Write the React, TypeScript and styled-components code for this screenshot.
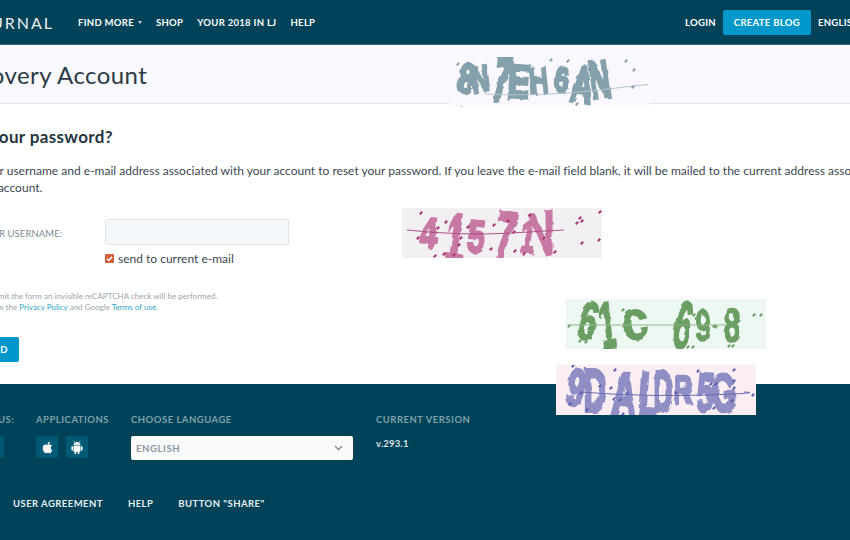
import React from "react";
import styled, { createGlobalStyle } from "styled-components";
import { FaApple, FaFacebookF, FaTwitter } from "react-icons/fa";

const Global = createGlobalStyle`
  html, body { margin: 0; padding: 0; width: 850px; height: 540px; overflow: hidden; background: #fff; }
  body { font-family: "Lato", "Liberation Sans", sans-serif; color: #2d3a42; }
  a { text-decoration: none; color: inherit; }
`;

const Page = styled.div`
  position: relative;
  width: 850px;
  height: 540px;
  overflow: hidden;
`;

const Header = styled.header`
  height: 44px;
  background: #004359;
  border-bottom: 1px solid #2f6a7c;
  display: flex;
  align-items: center;
  white-space: nowrap;
  color: #fff;
  font-size: 9.5px;
  font-weight: 700;
  letter-spacing: 0.3px;
`;

const Logo = styled.div`
  width: 54px;
  flex: none;
  display: flex;
  justify-content: flex-end;
  overflow: hidden;
  font-size: 16px;
  font-weight: 400;
  letter-spacing: 2px;
  color: #e6eef1;
`;

const Nav = styled.nav`
  display: flex;
  align-items: center;
  gap: 14px;
  margin-left: 24px;
`;

const Caret = styled.span`
  display: inline-block;
  margin-left: 4px;
  vertical-align: 2px;
  border-left: 2.5px solid transparent;
  border-right: 2.5px solid transparent;
  border-top: 3px solid #c4d2d8;
`;

const Right = styled.div`
  margin-left: auto;
  display: flex;
  align-items: center;
  gap: 7px;
  width: 165px;
  flex: none;
  overflow: hidden;
`;

const CreateBlog = styled.a`
  flex: none;
  width: 88px;
  height: 25px;
  display: flex;
  align-items: center;
  justify-content: center;
  border-radius: 2px;
  background: #0098cb;
  color: #fff;
`;

const TitleBand = styled.div`
  height: 57px;
  padding-top: 1px;
  background: #f8f9ff;
  border-bottom: 1px solid #e3e6ea;
  display: flex;
  align-items: center;
  overflow: hidden;
  white-space: nowrap;
`;

const Title = styled.h1`
  margin: 0 0 0 -48.5px;
  font-size: 24px;
  font-weight: 400;
  letter-spacing: 0.4px;
  color: #2b3a44;
`;

const Main = styled.main`
  height: 280px;
  box-sizing: border-box;
  padding: 23px 0 0 0;
  margin-left: -60px;
  width: 1200px;
  background: #fff;
`;

const Heading = styled.h2`
  margin: 0 0 0 -6px;
  font-size: 17px;
  line-height: 20px;
  font-weight: 700;
  letter-spacing: 0.35px;
  color: #26343d;
`;

const Lead = styled.p`
  margin: 16px 0 0 5px;
  width: 960px;
  font-size: 12px;
  line-height: 16.5px;
  text-indent: 4px;
  letter-spacing: 0.01px;
  color: #3c4850;
`;

const Row = styled.div`
  margin-top: 23px;
  display: flex;
  align-items: center;
`;

const Label = styled.label`
  width: 159px;
  flex: none;
  margin: 3px 0 0 6px;
  font-size: 9.5px;
  letter-spacing: 0.1px;
  color: #7d8b93;
`;

const Input = styled.input`
  width: 184px;
  height: 26px;
  box-sizing: border-box;
  background: #f5f8fa;
  border: 1px solid #e0e5e9;
  border-radius: 2px;
  padding: 0 6px;
`;

const CheckRow = styled.div`
  margin: 6px 0 0 165px;
  display: flex;
  align-items: center;
  gap: 4px;
  font-size: 12px;
  color: #3c4850;
`;

const Check = styled.span`
  width: 9px;
  height: 9px;
  flex: none;
  border-radius: 1px;
  background: #d2613a;
  display: flex;
  align-items: center;
  justify-content: center;
`;

const Note = styled.p`
  margin: 25px 0 0 7px;
  font-size: 8px;
  line-height: 11px;
  letter-spacing: 0.02px;
  color: #9aa5ab;
`;

const NoteLink = styled.a`
  color: #2fa3c9;
`;

const Submit = styled.button`
  display: block;
  margin-top: 24px;
  width: 79px;
  height: 25px;
  padding: 0 11px 0 0;
  border: 0;
  border-radius: 2px;
  text-align: right;
  background: #0098cb;
  color: #fff;
  font: 700 9.5px "Lato", sans-serif;
  letter-spacing: 0.45px;
`;

const Footer = styled.footer`
  height: 156px;
  background: #004359;
  box-sizing: border-box;
  padding-top: 29px;
  white-space: nowrap;
  overflow: hidden;
`;

const Cols = styled.div`
  display: flex;
  margin-left: -48px;
`;

const Col = styled.div<{ $w: number }>`
  width: ${(p) => p.$w}px;
  flex: none;
`;

const ColTitle = styled.div`
  font-size: 9.5px;
  line-height: 14px;
  font-weight: 700;
  letter-spacing: 0.5px;
  color: #7fa0ad;
  margin-bottom: 9px;
`;

const IconRow = styled.div`
  display: flex;
  gap: 8px;
`;

const SocialBtn = styled.a`
  width: 22px;
  height: 22px;
  border-radius: 2px;
  background: #005a75;
  color: #fff;
  display: flex;
  align-items: center;
  justify-content: center;
  font-size: 13px;
`;

const Select = styled.div`
  width: 222px;
  height: 24px;
  box-sizing: border-box;
  padding: 0 10px 0 5px;
  border-radius: 2px;
  background: #f7f9fb;
  display: flex;
  align-items: center;
  justify-content: space-between;
  font-size: 9.5px;
  font-weight: 700;
  letter-spacing: 0.6px;
  color: #8b989f;
`;

const Version = styled.div`
  padding-top: 1px;
  font-size: 9.5px;
  line-height: 14px;
  font-weight: 700;
  letter-spacing: 0.2px;
  color: #d9e4e8;
`;

const Bottom = styled.nav`
  display: flex;
  gap: 25px;
  margin: 37px 0 0 13px;
  font-size: 9.5px;
  line-height: 14px;
  font-weight: 700;
  letter-spacing: 0.45px;
  color: #e6eef1;
`;

/* CAPTCHA pictures laid over the page */
const CaptchaBox = styled.svg<{ $x: number; $y: number; $bg: string }>`
  position: absolute;
  left: ${(p) => p.$x}px;
  top: ${(p) => p.$y}px;
  width: 200px;
  height: 50px;
  background: ${(p) => p.$bg};
`;

type Glyph = [string, number, number, number, number, number];
type CaptchaData = {
  id: string; x: number; y: number; bg: string; ink: string; dot: string; rule: string; weight: number;
  line: string; glyphs: Glyph[]; dots: [number, number][];
};

const captchas: CaptchaData[] = [
  {
    id: "c1", x: 449, y: 57, bg: "#fbf7ff", ink: "#84a1ab", dot: "#84a1ab", rule: "#b3c6cd", weight: 2.4,
    line: "M36 37 Q90 40 150 33 T196 28",
    glyphs: [
      ["8", 14, 35, 14, 0.95, 1.35], ["N", 33, 35, -8, 0.85, 1.25], ["7", 50, 44, 8, 1, 2.1],
      ["E", 69, 40, 4, 1.1, 1.55], ["H", 91, 36, -6, 0.85, 1.2], ["6", 112, 35, 4, 0.8, 1.2],
      ["A", 131, 45, 8, 0.95, 1.65], ["N", 153, 40, -8, 0.9, 1.7],
    ],
    dots: [[9,7],[28,11],[54,4],[102,3],[119,4],[135,9],[147,9],[153,5],[177,4],[185,13],[12,51],[60,42],[128,47],[184,30]],
  },
  {
    id: "c2", x: 402, y: 208, bg: "#f3f0f3", ink: "#c878a5", dot: "#a8326f", rule: "#b0508a", weight: 1.8,
    line: "M5 22 Q60 28 110 25 T162 22",
    glyphs: [
      ["4", 25, 40, 6, 1.1, 1.45], ["1", 50, 54, 8, 1.1, 2.3], ["5", 73, 44, 6, 1.1, 1.5],
      ["7", 100, 52, 8, 1.2, 2.3], ["1", 124, 44, 8, 0.9, 1.5], ["V", 147, 46, -12, 1.15, 2],
    ],
    dots: [[19,5],[44,14],[16,30],[36,20],[66,19],[59,30],[57,37],[42,46],[52,47],[33,48],[92,17],[106,13],[112,24],[128,7],[142,30],[113,43],[89,41],[122,46],[153,44],[175,15],[178,10],[180,13],[180,35],[197,32],[198,4]],
  },
  {
    id: "c3", x: 566, y: 299, bg: "#eef8f3", ink: "#6b9e63", dot: "#6b9e63", rule: "#8db687", weight: 1,
    line: "M3 26 L160 26",
    glyphs: [
      ["6", 17, 40, 16, 1.1, 1.8], ["1", 44, 49, -6, 1, 2.2], ["c", 72, 40, -10, 1.6, 1.8],
      ["6", 113, 49, 10, 1.05, 2.25], ["9", 137, 42, 0, 0.9, 1.5], ["8", 166, 43, 0, 1.05, 1.6],
    ],
    dots: [[3,27],[14,42],[20,43],[57,11],[125,7],[128,16],[148,27],[150,28],[122,48],[127,48],[163,47],[167,47],[188,16],[195,16]],
  },
  {
    id: "c4", x: 556, y: 365, bg: "#fbeef3", ink: "#8f8fc6", dot: "#5f5fb0", rule: "#6a6ab4", weight: 2,
    line: "M24 27 Q90 32 150 30 T188 27",
    glyphs: [
      ["9", 17, 40, 10, 1.05, 1.7], ["D", 39, 46, 0, 1.05, 2], ["A", 67, 50, 4, 1.1, 2.05],
      ["L", 91, 51, 4, 0.95, 2.1], ["D", 107, 46, 0, 0.85, 1.9], ["R", 127, 39, 0, 0.9, 1.35],
      ["5", 148, 46, 4, 1, 1.8], ["G", 169, 46, -4, 1.05, 1.75],
    ],
    dots: [[17,1],[25,28],[14,39],[31,45],[59,5],[44,21],[55,23],[58,34],[64,35],[71,28],[67,49],[120,28],[142,6],[155,19],[160,19],[178,5],[178,16],[178,23],[176,36],[158,43],[197,30]],
  },
];

function Captcha({ c }: { c: CaptchaData }) {
  return (
    <CaptchaBox $x={c.x} $y={c.y} $bg={c.bg} viewBox="0 0 200 50" aria-hidden="true">
      <defs>
        <filter id={c.id} x="-10%" y="-10%" width="120%" height="120%">
          <feTurbulence type="fractalNoise" baseFrequency="0.09" numOctaves="2" seed="4" />
          <feDisplacementMap in="SourceGraphic" scale="4" />
          <feGaussianBlur stdDeviation="0.45" />
        </filter>
      </defs>
      <g filter={`url(#${c.id})`}>
        {c.glyphs.map(([ch, x, y, r, sx, sy], i) => (
          <text
            key={i}
            transform={`translate(${x} ${y}) rotate(${r}) scale(${sx} ${sy})`}
            textAnchor="middle"
            fontFamily="Liberation Sans, sans-serif"
            fontWeight="700"
            fontSize="30"
            fill={c.ink}
            stroke={c.ink}
            strokeWidth={c.weight}
          >
            {ch}
          </text>
        ))}
      </g>
      <path d={c.line} fill="none" stroke={c.rule} strokeWidth="1" />
      {c.dots.map(([x, y], i) => (
        <path key={i} d={`M${x - 1.2} ${y + 1.2} L${x + 1.2} ${y - 1.2}`} stroke={c.dot} strokeWidth="2" />
      ))}
    </CaptchaBox>
  );
}

function AndroidIcon() {
  return (
    <svg width="14" height="15" viewBox="0 0 16 17" fill="#fff">
      <path d="M4 6.2a4 4 0 0 1 8 0z" />
      <path d="M5.4 2.8 4.4.8M10.6 2.8l1-2" stroke="#fff" strokeWidth=".7" />
      <rect x="4" y="6.9" width="8" height="6.6" rx="1" />
      <rect x="1.6" y="6.9" width="1.8" height="5.2" rx=".9" />
      <rect x="12.6" y="6.9" width="1.8" height="5.2" rx=".9" />
      <rect x="5.3" y="12.5" width="1.8" height="3.8" rx=".9" />
      <rect x="8.9" y="12.5" width="1.8" height="3.8" rx=".9" />
      <circle cx="6.2" cy="4.4" r=".55" fill="#005a75" />
      <circle cx="9.8" cy="4.4" r=".55" fill="#005a75" />
    </svg>
  );
}

export default function App() {
  return (
    <Page>
      <Global />
      <Header>
        <Logo>JOURNAL</Logo>
        <Nav>
          <a>FIND MORE<Caret /></a>
          <a>SHOP</a>
          <a>YOUR 2018 IN LJ</a>
          <a>HELP</a>
        </Nav>
        <Right>
          <a>LOGIN</a>
          <CreateBlog>CREATE BLOG</CreateBlog>
          <a>ENGLISH</a>
        </Right>
      </Header>
      <TitleBand>
        <Title>Recovery Account</Title>
      </TitleBand>
      <Main>
        <Heading>Forgot your password?</Heading>
        <Lead>
          Enter your username and e-mail address associated with your account to reset your password. If you leave the
          e-mail field blank, it will be mailed to the current address associated with your account.
        </Lead>
        <Row>
          <Label>ENTER YOUR USERNAME:</Label>
          <Input />
        </Row>
        <CheckRow>
          <Check>
            <svg width="7" height="7" viewBox="0 0 10 10">
              <path d="M1.5 5.2 L4 7.8 L8.6 2.4" fill="none" stroke="#fff" strokeWidth="2" />
            </svg>
          </Check>
          send to current e-mail
        </CheckRow>
        <Note>
          When you submit the form an invisible reCAPTCHA check will be performed.
          <br />
          You must follow the <NoteLink>Privacy Policy</NoteLink> and Google <NoteLink>Terms of use</NoteLink>.
        </Note>
        <Submit>SEND</Submit>
      </Main>
      <Footer>
        <Cols>
          <Col $w={84}>
            <ColTitle>FOLLOW US:</ColTitle>
            <IconRow>
              <SocialBtn><FaFacebookF /></SocialBtn>
              <SocialBtn><FaTwitter /></SocialBtn>
            </IconRow>
          </Col>
          <Col $w={95}>
            <ColTitle>APPLICATIONS</ColTitle>
            <IconRow>
              <SocialBtn><FaApple /></SocialBtn>
              <SocialBtn><AndroidIcon /></SocialBtn>
            </IconRow>
          </Col>
          <Col $w={245}>
            <ColTitle>CHOOSE LANGUAGE</ColTitle>
            <Select>
              ENGLISH
              <svg width="9" height="6" viewBox="0 0 9 6">
                <path d="M1 1 L4.5 4.5 L8 1" fill="none" stroke="#7f8c93" strokeWidth="1.3" />
              </svg>
            </Select>
          </Col>
          <Col $w={120}>
            <ColTitle>CURRENT VERSION</ColTitle>
            <Version>v.293.1</Version>
          </Col>
        </Cols>
        <Bottom>
          <a>USER AGREEMENT</a>
          <a>HELP</a>
          <a>BUTTON "SHARE"</a>
        </Bottom>
      </Footer>
      {captchas.map((c) => (
        <Captcha key={c.id} c={c} />
      ))}
    </Page>
  );
}
